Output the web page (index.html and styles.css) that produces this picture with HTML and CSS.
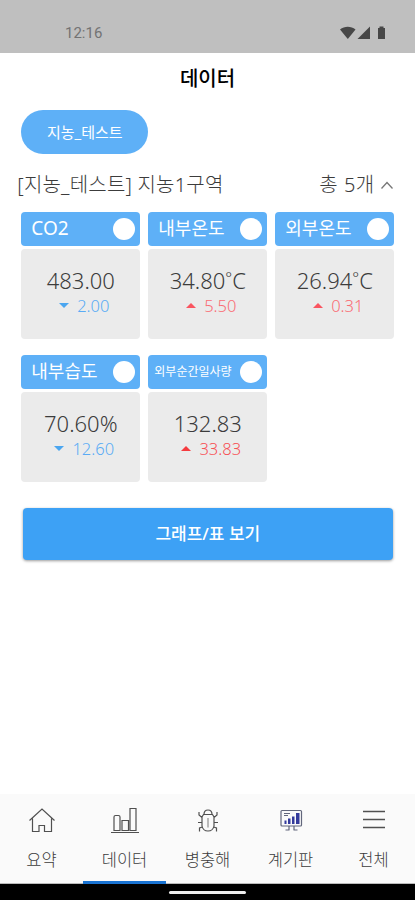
FILE: index.html
```html
<!DOCTYPE html>
<html lang="ko">
<head>
<meta charset="utf-8">
<meta name="viewport" content="width=device-width, initial-scale=1">
<title>데이터</title>
<link rel="stylesheet" href="styles.css">
</head>
<body>
<div class="statusbar">
  <span class="clock">12:16</span>
  <svg class="status-icons" width="48" height="16" viewBox="0 0 48 16">
    <path d="M0 4.500C4.500.9 11 .9 15.500 4.500L7.800 14Z"/>
    <path d="M30 1.500V14H17.500Z"/>
    <path d="M38 3h1.500V1.500h4V3H45v11h-7z"/>
  </svg>
</div>
<main>
  <h1 class="title">데이터</h1>
  <button class="chip"><span>지농_테스트</span></button>
  <div class="zone">
    <span class="zone-name">[지농_테스트] 지농1구역</span>
    <span class="zone-count">총 5개</span>
    <svg class="chevron" width="14" height="10" viewBox="0 0 14 10"><path d="M1.500 8.500 7 2.500l5.500 6"/></svg>
  </div>
  <section class="grid">
    <article class="sensor">
      <header class="head"><span class="name latin">CO2</span><i class="knob"></i></header>
      <div class="body"><div class="value">483.00</div><div class="delta down"><i class="tri"></i><span>2.00</span></div></div>
    </article>
    <article class="sensor">
      <header class="head"><span class="name">내부온도</span><i class="knob"></i></header>
      <div class="body"><div class="value">34.80<span class="deg">°</span>C</div><div class="delta up"><i class="tri"></i><span>5.50</span></div></div>
    </article>
    <article class="sensor">
      <header class="head"><span class="name">외부온도</span><i class="knob"></i></header>
      <div class="body"><div class="value">26.94<span class="deg">°</span>C</div><div class="delta up"><i class="tri"></i><span>0.31</span></div></div>
    </article>
    <article class="sensor">
      <header class="head"><span class="name">내부습도</span><i class="knob"></i></header>
      <div class="body"><div class="value">70.60%</div><div class="delta down"><i class="tri"></i><span>12.60</span></div></div>
    </article>
    <article class="sensor">
      <header class="head"><span class="name small">외부순간일사량</span><i class="knob"></i></header>
      <div class="body"><div class="value">132.83</div><div class="delta up strong"><i class="tri"></i><span>33.83</span></div></div>
    </article>
  </section>
  <button class="graph">그래프/표 보기</button>
</main>
<nav class="tabs">
  <a class="tab"><svg width="30" height="30" viewBox="0 0 30 30"><path d="M2.500 15.500 15 4 27.500 15.500M5.500 13.500v13h6.500v-6h5.500v6h7V13.500"/></svg><span>요약</span></a>
  <a class="tab active"><svg width="30" height="30" viewBox="0 0 30 30"><path d="M1 27.500h28M4 25.500V12q0-1.500 1.500-1.500h3Q10 10.500 10 12v13.500zM12 25.500v-10h6.500v10zM20 25.500V3.500h6v22z"/></svg><span>데이터</span></a>
  <a class="tab"><svg width="30" height="30" viewBox="0 0 30 30"><path d="M10.500 9.500h9L21 12v9q-1 5-6 5t-6-5v-9zM11 9.500Q11 5 15 5t4 4.500M9 12.500 6 10V7M21 12.500 24 10V7M9 17.500H5M21 17.500h4M9.500 22 6.500 23v3.500M20.500 22l3 1v3.500"/><path class="spine" d="M15 13v9.500"/></svg><span>병충해</span></a>
  <a class="tab"><svg width="30" height="30" viewBox="0 0 30 30"><g class="monitor"><rect x="5" y="5.500" width="20.500" height="15.500" rx="1"/><path d="M13 21v4M18 21v4M9.500 25h4M17.500 25h4M8 8.500h6M8 10.500h4"/></g><path class="bars" d="M8.500 15.500h2v3.500h-2zM12 13.500h2.500V19H12zM16 11.500h2.500V19H16zM20 8h3.500v11H20z"/></svg><span>계기판</span></a>
  <a class="tab"><svg width="30" height="30" viewBox="0 0 30 30"><path class="menu" d="M4 6.500h22M4 14.500h22M4 22.500h22"/></svg><span>전체</span></a>
</nav>
<div class="gesture"><i></i></div>
</body>
</html>
```
FILE: styles.css
```css
* { box-sizing: border-box; }
body {
  margin: 0;
  height: 900px;
  display: flex;
  flex-direction: column;
  background: #fff;
  color: #3c3c3c;
  font-family: "Noto Sans", "Noto Sans CJK KR", sans-serif;
  font-weight: 300;
  overflow: hidden;
}
button { border: 0; font: inherit; color: #fff; padding: 0; display: block; }
.statusbar {
  height: 52.5px;
  flex: none;
  background: #bfbfbf;
  display: flex;
  align-items: flex-start;
  justify-content: space-between;
  padding: 24px 27px 0 65px;
}
.clock { font: 400 15px/18px Roboto, sans-serif; color: #737373; }
.status-icons { fill: #474747; margin-top: 1px; }
main { flex: 1; padding: 0 21.3px; }
.title {
  margin: 0;
  padding-top: 11px;
  height: 57.5px;
  line-height: 30px;
  text-align: center;
  font-size: 20px;
  font-weight: 500;
  color: #000;
}
.chip {
  width: 127px;
  height: 44px;
  border-radius: 22px;
  background: #5eb0f7;
  font-size: 15px;
  font-weight: 400;
  line-height: 42px;
}
.zone {
  display: flex;
  align-items: center;
  height: 30px;
  margin: 16px 0 11.500px -4px;
  font-size: 20px;
  letter-spacing: .2px;
  line-height: 30px;
  white-space: nowrap;
}
.zone-count { margin-left: auto; letter-spacing: .5px; }
.chevron { margin: 0 0 0 5px; fill: none; stroke: #777; stroke-width: 1.3; }
.grid {
  display: grid;
  grid-template-columns: repeat(3, 119px);
  gap: 16px 8px;
}
.head {
  height: 34px;
  border-radius: 4px;
  background: #5eb0f7;
  color: #fff;
  display: flex;
  align-items: center;
  justify-content: space-between;
  padding: 0 5px 0 10px;
}
.name { font-size: 18px; font-weight: 400; line-height: 30px; margin-top: -2px; white-space: nowrap; }
.name.latin { font-size: 19px; }
.name.small { font-size: 12px; margin: 0 0 0 -4px; }
.knob { width: 22px; height: 22px; border-radius: 50%; background: #fff; flex: none; }
.body {
  height: 90px;
  margin-top: 3px;
  border-radius: 4px;
  background: #ebebeb;
  padding-top: 16px;
  text-align: center;
}
.value { height: 30px; font-size: 22px; line-height: 30px; }
.deg { font-size: 16px; line-height: 1; vertical-align: 5px; }
.delta {
  display: flex;
  align-items: center;
  justify-content: center;
  gap: 8px;
  padding-left: 7px;
  font-size: 16.5px;
  line-height: 22px;
}
.tri { border: 0 solid transparent; border-width: 0 5px; }
.down { color: #5aabf5; }
.down .tri { border-top: 5px solid #4ba6f0; }
.up { color: #fa6b74; }
.up .tri { border-bottom: 5px solid #fa5560; }
.up.strong { color: #f75055; }
.up.strong .tri { border-bottom-color: #f53b3f; }
.graph {
  width: 370px;
  height: 52px;
  margin: 26px 0 0 1.5px;
  border-radius: 4px;
  background: #3da1f5;
  box-shadow: 0 1px 3px rgba(0, 0, 0, .4);
  font-size: 17px;
  font-weight: 500;
  line-height: 50px;
}
.tabs {
  height: 90px;
  flex: none;
  display: grid;
  grid-template-columns: repeat(5, 1fr);
  background: #fafafa;
}
.tab {
  display: flex;
  flex-direction: column;
  align-items: center;
  padding-top: 11px;
  border-bottom: 1px solid #bbb;
  font-size: 16.5px;
  line-height: 24px;
}
.tab span { margin-top: 13px; }
.tab svg { fill: none; stroke: #505050; stroke-width: 1.2; }
.tab.active { border-bottom: 3px solid #1973d2; }
.tab .menu { stroke-width: 1.7; }
.tab .spine { stroke: #bbb; stroke-width: 2; }
.tab .monitor { stroke: #62677c; }
.tab .bars { fill: #343b9c; stroke: none; }
.gesture {
  height: 16px;
  flex: none;
  background: #000;
  display: flex;
  justify-content: center;
  padding-top: 7px;
}
.gesture i { width: 77px; height: 3px; border-radius: 2px; background: #eee; }
```
